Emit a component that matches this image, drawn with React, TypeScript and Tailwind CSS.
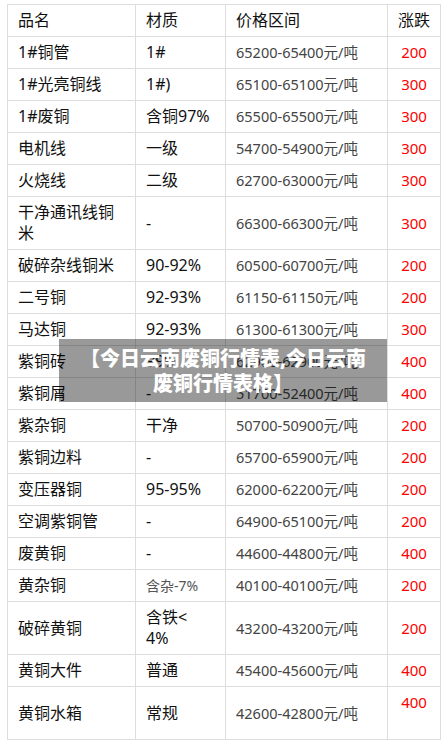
import React from 'react';

type Row = {
  name: React.ReactNode;
  grade: React.ReactNode;
  price: string;
  change: React.ReactNode;
  small?: boolean;
};

const rows: Row[] = [
  { name: '1#铜管', grade: '1#', price: '65200-65400元/吨', change: '200' },
  { name: '1#光亮铜线', grade: '1#)', price: '65100-65100元/吨', change: '300' },
  { name: '1#废铜', grade: '含铜97%', price: '65500-65500元/吨', change: '300' },
  { name: '电机线', grade: '一级', price: '54700-54900元/吨', change: '300' },
  { name: '火烧线', grade: '二级', price: '62700-63000元/吨', change: '300' },
  { name: <>干净通讯线铜<br />米</>, grade: '-', price: '66300-66300元/吨', change: '300' },
  { name: '破碎杂线铜米', grade: '90-92%', price: '60500-60700元/吨', change: '200' },
  { name: '二号铜', grade: '92-93%', price: '61150-61150元/吨', change: '200' },
  { name: '马达铜', grade: '92-93%', price: '61300-61300元/吨', change: '300' },
  { name: '紫铜砖', grade: '99%', price: '62900-62900元/吨', change: '400' },
  { name: '紫铜屑', grade: '-', price: '51700-52400元/吨', change: '400' },
  { name: '紫杂铜', grade: '干净', price: '50700-50900元/吨', change: '200' },
  { name: '紫铜边料', grade: '-', price: '65700-65900元/吨', change: '200' },
  { name: '变压器铜', grade: '95-95%', price: '62000-62200元/吨', change: '200' },
  { name: '空调紫铜管', grade: '-', price: '64900-65100元/吨', change: '200' },
  { name: '废黄铜', grade: '-', price: '44600-44800元/吨', change: '400' },
  { name: '黄杂铜', grade: '含杂-7%', price: '40100-40100元/吨', change: '200', small: true },
  { name: '破碎黄铜', grade: <>含铁&lt;<br />4%</>, price: '43200-43200元/吨', change: '200' },
  { name: '黄铜大件', grade: '普通', price: '45400-45600元/吨', change: '400' },
  { name: '黄铜水箱', grade: '常规', price: '42600-42800元/吨', change: <>400<br />&nbsp;</> },
];

export default function App() {
  return (
    <div
      className="relative bg-white min-h-[742px] px-[7px] pt-[4px] text-[16px] leading-[21px] text-[#111]"
      style={{ fontFamily: '"Noto Sans", "Noto Sans CJK SC", sans-serif' }}
    >
      <table className="w-[433px] table-fixed border-collapse">
        <colgroup>
          <col className="w-[128px]" />
          <col className="w-[90px]" />
          <col className="w-[162px]" />
          <col className="w-[53px]" />
        </colgroup>
        <thead>
          <tr>
            <th className="border border-[#ddd] px-[10px] py-[5px] text-left font-normal">品名</th>
            <th className="border border-[#ddd] px-[10px] py-[5px] text-left font-normal">材质</th>
            <th className="border border-[#ddd] px-[10px] py-[5px] text-left font-normal">价格区间</th>
            <th className="border border-[#ddd] px-[6px] py-[5px] text-center font-normal">涨跌</th>
          </tr>
        </thead>
        <tbody>
          {rows.map((r, i) => (
            <tr key={i}>
              <td className="border border-[#ddd] px-[10px] py-[5px] align-middle">{r.name}</td>
              <td className="border border-[#ddd] px-[10px] py-[5px] align-middle">
                {r.small ? <span className="text-[14px] text-[#555]">{r.grade}</span> : r.grade}
              </td>
              <td className="border border-[#ddd] px-[10px] py-[5px] align-middle text-[14.5px] text-[#444]">{r.price}</td>
              <td className="border border-[#ddd] px-[6px] py-[5px] align-middle text-center text-[15px] text-[#ff0000]">{r.change}</td>
            </tr>
          ))}
        </tbody>
      </table>

      {/* caption overlay */}
      <div className="absolute left-[59px] top-[339px] w-[328px] h-[63px] bg-black/40 flex items-center justify-center">
        <p className="text-center text-white font-black text-[20px] leading-[25px]">
          【今日云南废铜行情表,今日云南
          <br />
          废铜行情表格】
        </p>
      </div>
    </div>
  );
}
